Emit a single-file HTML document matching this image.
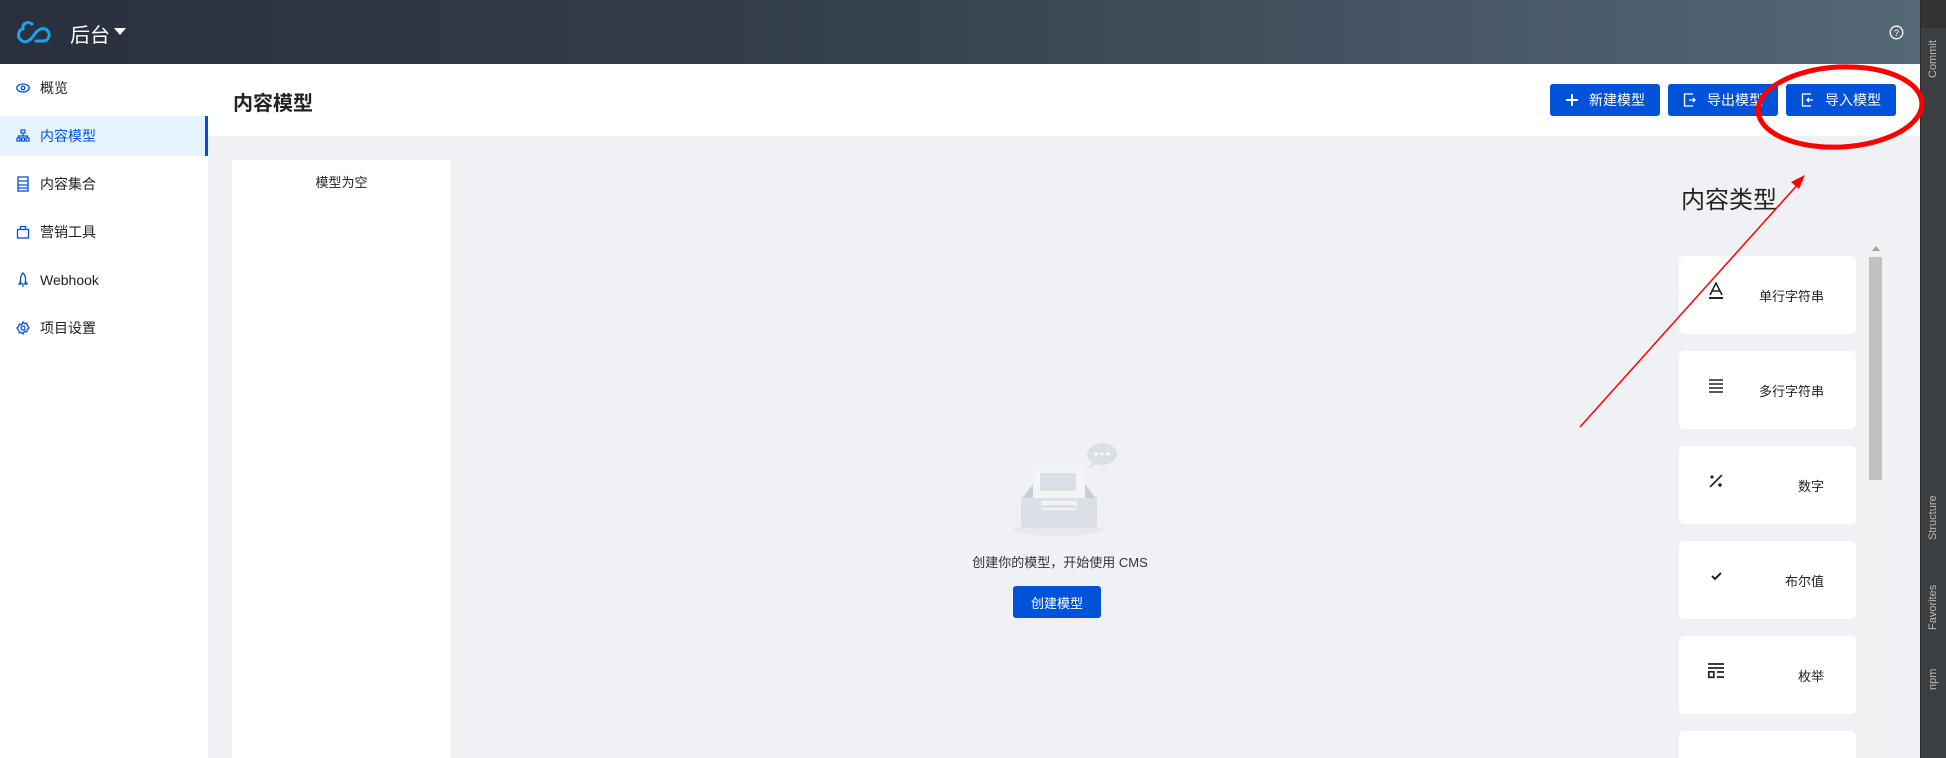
<!DOCTYPE html>
<html style="width:1946px;height:758px;overflow:hidden"><head><meta charset="utf-8"><style>
*{margin:0;padding:0;box-sizing:border-box}
body{width:1946px;height:758px;overflow:hidden;position:relative;background:#f0f1f4;font-family:"Liberation Sans","Noto Sans CJK SC",sans-serif;color:#222}
.a{position:absolute}
.hdr{left:0;top:0;width:1920px;height:64px;background:linear-gradient(90deg,#29303d 0%,#333d4b 40%,#546876 100%)}
.side{left:0;top:64px;width:208px;height:694px;background:#fff}
.item{position:absolute;left:0;width:208px;height:40px;display:flex;align-items:center;font-size:14px;color:#222}
.item svg{position:absolute;left:16px}
.item span{position:absolute;left:40px}
.act{background:#e5f2ff;color:#0052d9;border-right:3px solid #0052d9}
.btn{position:absolute;top:84px;width:110px;height:32px;background:#0052d9;color:#fff;border-radius:3px;font-size:14px;display:flex;align-items:center;justify-content:center;gap:10px}
.card{position:absolute;left:1679px;width:177px;height:78px;background:#fff;border-radius:5px;font-size:13px}
.card .ic{position:absolute;left:28px;top:26px;width:18px;height:18px}
.card .t{position:absolute;right:32px;top:30px}
.ide{left:1920px;top:0;width:26px;height:758px;background:#3c3f41;border-left:1px solid #2b2b2b}
.vt{position:absolute;transform:rotate(-90deg);transform-origin:left top;color:#bbb;font-size:11px;white-space:nowrap}
</style></head><body>
<div class="a hdr"></div>
<svg class="a" style="left:16px;top:20px" width="36" height="26" viewBox="0 0 36 26"><path d="M16 4 C12 1 6 3 7 9 C2 10 1 17 5 20 C9 24 14 21 18 15 C22 9 27 7 31 10 C35 14 33 21 27 21 L20 21" fill="none" stroke="#1aa3f0" stroke-width="3" stroke-linecap="round"/></svg>
<div class="a" style="left:70px;top:19px;color:#fff;font-size:20px">后台</div>
<svg class="a" style="left:114px;top:28px" width="12" height="8"><path d="M0 0h12L6 7z" fill="#fff"/></svg>
<svg class="a" style="left:1889px;top:25px" width="15" height="15"><circle cx="7.5" cy="7.5" r="6.3" fill="none" stroke="#fff" stroke-width="1.3"/><text x="7.5" y="11" font-size="9" fill="#fff" text-anchor="middle" font-family="Liberation Sans">?</text></svg>

<div class="a side">
<div class="item" style="top:4px"><svg width="14" height="14" viewBox="0 0 14 14"><ellipse cx="7" cy="7" rx="6.2" ry="4" fill="none" stroke="#0052d9" stroke-width="1.3"/><circle cx="7" cy="7" r="1.8" fill="none" stroke="#0052d9" stroke-width="1.3"/></svg><span>概览</span></div>
<div class="item act" style="top:52px"><svg width="14" height="14" viewBox="0 0 14 14" fill="none" stroke="#0052d9" stroke-width="1.2"><rect x="5" y="1" width="4" height="3"/><rect x="1" y="9" width="3" height="3"/><rect x="5.5" y="9" width="3" height="3"/><rect x="10" y="9" width="3" height="3"/><path d="M7 4v3M2.5 9V7h9v2"/></svg><span>内容模型</span></div>
<div class="item" style="top:100px"><svg width="14" height="16" viewBox="0 0 14 16" fill="none" stroke="#0052d9" stroke-width="1.3"><rect x="2" y="1" width="10" height="14"/><path d="M2 5h10M2 9h10M2 12h10"/></svg><span>内容集合</span></div>
<div class="item" style="top:148px"><svg width="14" height="14" viewBox="0 0 14 14" fill="none" stroke="#0052d9" stroke-width="1.3"><rect x="1.5" y="4.5" width="11" height="8.5"/><path d="M4.5 4.5V1.5h5v3"/></svg><span>营销工具</span></div>
<div class="item" style="top:196px"><svg width="14" height="16" viewBox="0 0 14 16" fill="none" stroke="#0052d9" stroke-width="1.3"><path d="M7 1C4 4 4 9 5 12h4c1-3 1-8-2-11zM5 9l-2 3h2M9 9l2 3H9M6 14h2"/></svg><span>Webhook</span></div>
<div class="item" style="top:244px"><svg width="14" height="14" viewBox="0 0 14 14" fill="none" stroke="#0052d9" stroke-width="1.3"><circle cx="7" cy="7" r="2"/><path d="M7 1l1.5 1.7 2.2-.5.5 2.2L13 7l-1.8 1.6-.5 2.2-2.2-.5L7 13l-1.5-1.7-2.2.5-.5-2.2L1 7l1.8-1.6.5-2.2 2.2.5z"/></svg><span>项目设置</span></div>
</div>
<div class="a" style="left:208px;top:64px;width:1712px;height:72px;background:#fff"></div>
<div class="a" style="left:233px;top:87px;font-size:20px;font-weight:bold;color:#222">内容模型</div>
<div class="btn" style="left:1550px"><svg width="14" height="14"><path d="M7 1v12M1 7h12" stroke="#fff" stroke-width="2"/></svg>新建模型</div>
<div class="btn" style="left:1668px"><svg width="14" height="14" fill="none" stroke="#fff" stroke-width="1.3"><path d="M10 1H1.5v12H10M6 7h6M10 5l2 2-2 2"/></svg>导出模型</div>
<div class="btn" style="left:1786px"><svg width="14" height="14" fill="none" stroke="#fff" stroke-width="1.3"><path d="M10 1H1.5v12H10M6 7h6M8 5L6 7l2 2"/></svg>导入模型</div>

<div class="a" style="left:232px;top:160px;width:219px;height:598px;background:#fff"></div>
<div class="a" style="left:232px;top:172px;width:219px;text-align:center;font-size:13px">模型为空</div>

<svg class="a" style="left:1010px;top:438px" width="115" height="100" viewBox="0 0 115 100">
<ellipse cx="48" cy="92" rx="45" ry="6" fill="#e8e9ee"/>
<path d="M12 60 L28 40 L70 40 L86 60Z" fill="#c9ced6"/>
<rect x="23" y="28" width="52" height="55" rx="3" fill="#f3f4f6"/>
<rect x="30" y="35" width="36" height="18" fill="#dcdfe6"/>
<rect x="30" y="60" width="36" height="3" fill="#dcdfe6"/><rect x="30" y="67" width="36" height="3" fill="#dcdfe6"/>
<path d="M11 60h20v8a4 4 0 0 0 4 4h28a4 4 0 0 0 4-4v-8h20v26a4 4 0 0 1-4 4H15a4 4 0 0 1-4-4z" fill="#dcdfe6"/>
<ellipse cx="92" cy="16" rx="15" ry="11" fill="#dcdfe6"/><path d="M82 24l-4 7 9-5z" fill="#dcdfe6"/>
<circle cx="86" cy="16" r="1.5" fill="#fff"/><circle cx="92" cy="16" r="1.5" fill="#fff"/><circle cx="98" cy="16" r="1.5" fill="#fff"/>
</svg>
<div class="a" style="left:900px;top:552px;width:320px;text-align:center;font-size:13px;color:#333">创建你的模型，开始使用 CMS</div>
<div class="a" style="left:1013px;top:586px;width:88px;height:32px;background:#0052d9;border-radius:3px;color:#fff;font-size:13px;display:flex;align-items:center;justify-content:center">创建模型</div>

<div class="a" style="left:1681px;top:180px;font-size:24px;color:#222">内容类型</div>
<div class="card" style="top:256px"><svg class="ic" viewBox="0 0 18 18"><path d="M3 13L9 1l6 12M5.5 9h7" fill="none" stroke="#222" stroke-width="1.6"/><path d="M2 16h14" stroke="#222" stroke-width="2"/></svg><div class="t">单行字符串</div></div>
<div class="card" style="top:351px"><svg class="ic" viewBox="0 0 18 18"><path d="M2 3h14M2 7h14M2 11h14M2 15h14" stroke="#222" stroke-width="1.6"/></svg><div class="t">多行字符串</div></div>
<div class="card" style="top:446px"><svg class="ic" viewBox="0 0 18 18"><circle cx="5" cy="5" r="1.6" fill="#222"/><circle cx="13" cy="13" r="1.8" fill="#222"/><path d="M3 15L15 3" stroke="#222" stroke-width="1.6"/></svg><div class="t">数字</div></div>
<div class="card" style="top:541px"><svg class="ic" viewBox="0 0 18 18"><path d="M5 9l3 3 6-6" fill="none" stroke="#222" stroke-width="2"/></svg><div class="t">布尔值</div></div>
<div class="card" style="top:636px"><svg class="ic" viewBox="0 0 18 18" fill="none" stroke="#222" stroke-width="1.7"><path d="M1 2h16M1 6h16M10 10h7M10 15h7"/><rect x="1.8" y="9.8" width="5" height="5.5"/></svg><div class="t">枚举</div></div>
<div class="card" style="top:731px;height:27px;border-radius:5px 5px 0 0"></div>
<div class="a" style="left:1868px;top:243px;width:15px;height:515px;background:#f1f1f1"></div>
<div class="a" style="left:1869px;top:257px;width:13px;height:223px;background:#c1c1c1"></div>
<svg class="a" style="left:1872px;top:246px" width="8" height="5"><path d="M0 5L4 0l4 5z" fill="#a3a3a3"/></svg>

<div class="a ide">
<div style="position:absolute;left:0;top:0;width:25px;height:28px;background:#313335"></div>
<div class="vt" style="left:6px;top:78px">Commit</div>
<div class="vt" style="left:6px;top:540px">Structure</div>
<div class="vt" style="left:6px;top:630px">Favorites</div>
<div class="vt" style="left:6px;top:690px">npm</div>
</div>

<svg class="a" style="left:0;top:0" width="1946" height="758">
<ellipse cx="1840" cy="107" rx="82" ry="40" fill="none" stroke="#f00" stroke-width="5" transform="rotate(-3 1840 107)"/>
<line x1="1580" y1="427" x2="1800" y2="182" stroke="#f00" stroke-width="1.5"/>
<path d="M1805 175l-14 7 8 7z" fill="#f00"/>
</svg>
</body></html>
